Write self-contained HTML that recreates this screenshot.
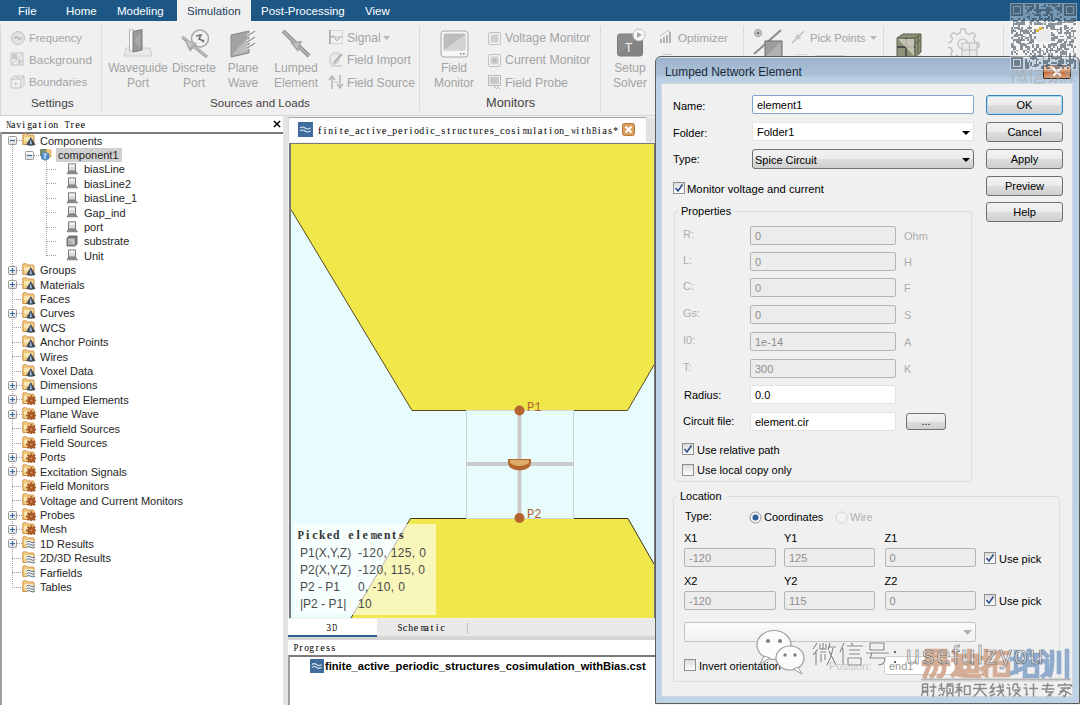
<!DOCTYPE html>
<html><head><meta charset="utf-8">
<style>
*{box-sizing:border-box}
html,body{margin:0;padding:0}
body{width:1080px;height:705px;overflow:hidden;position:relative;background:#f0f0f0;font-family:"Liberation Sans",sans-serif;color:#000}
.a{position:absolute}
.t{position:absolute;white-space:nowrap;line-height:14px;height:14px}
.m{font-family:"Liberation Mono",monospace}
/* menu */
#menu{left:0;top:0;width:1080px;height:21px;background:#1d5786}
.mi{position:absolute;top:4px;color:#fff;font-size:11.5px;line-height:14px;white-space:nowrap}
/* ribbon */
#ribbon{left:0;top:21px;width:1080px;height:95px;background:#f0f0f0;border-bottom:1px solid #d4d4d4}
.rt{position:absolute;color:#a3a3a3;font-size:12.1px;line-height:14px;white-space:nowrap}
.rc{position:absolute;color:#a3a3a3;font-size:12px;line-height:15px;text-align:center;white-space:nowrap}
.gl{position:absolute;color:#444;font-size:12.2px;line-height:14px;white-space:nowrap;top:96px}
.sep{position:absolute;top:25px;width:1px;height:85px;background:#dcdcdc}
/* tree */
.tr{position:absolute;font-size:11px;line-height:14px;white-space:nowrap;color:#262626}
/* dialog */
.dl{position:absolute;font-size:11px;line-height:14px;white-space:nowrap;color:#000}
.dg{position:absolute;font-size:11px;line-height:14px;white-space:nowrap;color:#adadad}
.inp{position:absolute;background:#fff;border:1px solid #abadb3;border-radius:2px;font-size:11px;line-height:16px;padding-left:4px;padding-top:1px;white-space:nowrap}
.dis{background:#ececec;border-color:#b4b4b4;color:#8e8e8e}
.btn{position:absolute;border:1px solid #707070;border-radius:3px;background:linear-gradient(#f3f3f3 0%,#ebebeb 50%,#dddddd 51%,#cfcfcf 100%);font-size:11px;line-height:18px;text-align:center;color:#000}
.cb{position:absolute;width:12px;height:12px;border:1px solid #8f8f8f;background:linear-gradient(#dcdcdc,#fff)}
</style></head>
<body>
<!-- MENU -->
<div id="menu" class="a">
  <div class="mi" style="left:18px">File</div>
  <div class="mi" style="left:66px">Home</div>
  <div class="mi" style="left:117px">Modeling</div>
  <div class="a" style="left:177px;top:0;width:74px;height:22px;background:#f0f0f0"></div>
  <div class="mi" style="left:187px;color:#1e3a5c">Simulation</div>
  <div class="mi" style="left:261px">Post-Processing</div>
  <div class="mi" style="left:365px">View</div>
</div>
<!-- RIBBON -->
<div id="ribbon" class="a">
  <div class="a" style="left:0;top:4px;width:1px;height:90px;background:#d8d8d8"></div>
  <!-- Settings group -->
  <svg class="a" style="left:10px;top:9px" width="16" height="16" viewBox="0 0 16 16"><circle cx="8" cy="8" r="6.5" fill="#e2e2e2" stroke="#c4c4c4"/><path d="M4.5 8.5 Q6 5.5 8 8 T11.5 7.5" fill="none" stroke="#a8a8a8" stroke-width="1.2"/></svg>
  <div class="rt" style="left:29px;top:10px;font-size:11.2px">Frequency</div>
  <svg class="a" style="left:10px;top:31px" width="14" height="14" viewBox="0 0 14 14"><rect x="1" y="1" width="12" height="12" fill="#ececec" stroke="#c0c0c0"/><path d="M2 2 H7 V7 H2Z" fill="#c8c8c8"/><path d="M2 12 L12 2" stroke="#c0c0c0"/><circle cx="9.5" cy="9.5" r="2.2" fill="#cacaca"/></svg>
  <div class="rt" style="left:29px;top:32px;font-size:11.8px">Background</div>
  <svg class="a" style="left:10px;top:53px" width="15" height="15" viewBox="0 0 15 15"><path d="M1 5 L4 2 H14 V11 L11 14 H1Z" fill="#eeeeee" stroke="#c2c2c2"/><path d="M1 5 H11 V14 M11 5 L14 2" fill="none" stroke="#c2c2c2"/><rect x="5" y="9" width="1.5" height="1.5" fill="#aaa"/><rect x="7" y="3" width="1.5" height="1" fill="#aaa"/></svg>
  <div class="rt" style="left:29px;top:54px;font-size:11.5px">Boundaries</div>
  <div class="gl" style="left:31px;top:75px;color:#444;font-size:11.8px">Settings</div>
  <div class="sep" style="left:101px;top:5px"></div>
  <!-- Sources and loads -->
  <svg class="a" style="left:123px;top:7px" width="30" height="29" viewBox="0 0 30 29"><path d="M3 20 H27 L29 28 H1Z" fill="#e9e9e9" stroke="#cfcfcf"/><rect x="6.5" y="2" width="4" height="21" fill="#fafafa" stroke="#b5b5b5"/><path d="M10 3.5 L19 1.5 V22 L10 24Z" fill="#9a9a9a" stroke="#7d7d7d"/><path d="M11 12 L17 6 V20Z" fill="#b6b6b6" opacity=".6"/></svg>
  <div class="rc" style="left:102px;top:40px;width:72px">Waveguide<br>Port</div>
  <svg class="a" style="left:180px;top:7px" width="31" height="30" viewBox="0 0 31 30"><circle cx="20" cy="10.5" r="8.5" fill="#f0f0f0" stroke="#a5a5a5" stroke-width="1.5"/><path d="M16 8 L21 7 L19 11 L24 13" fill="none" stroke="#707070" stroke-width="1.6"/><path d="M22 12.5 L24.5 13.2 L23 15" fill="#707070"/><path d="M2 9 L27 29" stroke="#9c9c9c" stroke-width="3"/><path d="M2 9 L27 29" stroke="#c4c4c4" stroke-width="1.2"/><path d="M4 11 L17 15.5 L10 24 Z" fill="#a9a9a9"/><path d="M6 12.5 L14 15.5 L10 20Z" fill="#c6c6c6"/></svg>
  <div class="rc" style="left:166px;top:40px;width:56px">Discrete<br>Port</div>
  <svg class="a" style="left:229px;top:9px" width="28" height="28" viewBox="0 0 28 28"><path d="M2 5 L20 1 V23 L2 27Z" fill="#a3a3a3" stroke="#8b8b8b"/><path d="M3 25 L19 7 V22Z" fill="#bcbcbc"/><path d="M18 6 q4 -2 8 -5 M18 12 q4 -2 8 -5 M18 18 q4 -2 8 -5" fill="none" stroke="#fbfbfb" stroke-width="3"/><path d="M18 6 q4 -2 8 -5 M18 12 q4 -2 8 -5 M18 18 q4 -2 8 -5" fill="none" stroke="#8e8e8e" stroke-width="1.2"/></svg>
  <div class="rc" style="left:222px;top:40px;width:42px">Plane<br>Wave</div>
  <svg class="a" style="left:281px;top:9px" width="30" height="28" viewBox="0 0 30 28"><path d="M2 1 L28 26" stroke="#8a8a8a" stroke-width="4"/><path d="M2 1 L28 26" stroke="#b5b5b5" stroke-width="2"/><path d="M9 12 L21 11 L17 22 Z" fill="#a3a3a3"/><path d="M12 13 L19 12.5 L16.5 19Z" fill="#c0c0c0"/></svg>
  <div class="rc" style="left:266px;top:40px;width:60px">Lumped<br>Element</div>
  <svg class="a" style="left:329px;top:9px" width="14" height="14" viewBox="0 0 14 14"><rect x="0.5" y="0.5" width="13" height="13" fill="#f2f2f2" stroke="#d4d4d4"/><path d="M1 0 V14" stroke="#8a8a8a"/><path d="M2 8 q2 -5 4 0 t4 0 q1.5 -3 3 0" fill="none" stroke="#a9a9a9"/><path d="M1 7 H13" stroke="#bbb"/></svg>
  <div class="rt" style="left:347px;top:10px">Signal</div>
  <svg class="a" style="left:383px;top:15px" width="7" height="4"><path d="M0 0 H7 L3.5 4Z" fill="#b8b8b8"/></svg>
  <svg class="a" style="left:329px;top:31px" width="15" height="15" viewBox="0 0 15 15"><path d="M1 4 L4 1 H10 V9 L7 12 H1Z" fill="#e8e8e8" stroke="#c4c4c4"/><path d="M5 11 L13 2" stroke="#b0b0b0" stroke-width="2"/><path d="M2 14 H13" stroke="#d0d0d0" stroke-width="1.5"/></svg>
  <div class="rt" style="left:347px;top:32px">Field Import</div>
  <svg class="a" style="left:328px;top:53px" width="16" height="16" viewBox="0 0 16 16"><path d="M4 15 V3 M1 6 L4 2 L7 6 M12 1 V13 M9 10 L12 14 L15 10" fill="none" stroke="#b9b9b9" stroke-width="1.6"/><path d="M4 8 L12 8" stroke="#c9c9c9"/></svg>
  <div class="rt" style="left:347px;top:55px">Field Source</div>
  <div class="gl" style="left:210px;top:75px;font-size:11.6px">Sources and Loads</div>
  <div class="sep" style="left:419px;top:5px"></div>
  <!-- Monitors -->
  <svg class="a" style="left:440px;top:9px" width="29" height="28" viewBox="0 0 29 28"><rect x="1" y="1" width="27" height="26" rx="3" fill="#f6f6f6" stroke="#a8a8a8"/><rect x="3.5" y="3.5" width="22" height="17" rx="1.5" fill="#bdbdbd"/><path d="M3.5 20 L25 5 V20Z" fill="#d4d4d4"/><rect x="20" y="23" width="1.6" height="1.6" fill="#888"/><rect x="23" y="23" width="1.6" height="1.6" fill="#888"/></svg>
  <div class="rc" style="left:428px;top:40px;width:52px">Field<br>Monitor</div>
  <svg class="a" style="left:488px;top:11px" width="13" height="13" viewBox="0 0 13 13"><rect x="0.5" y="0.5" width="12" height="12" rx="1.5" fill="#f4f4f4" stroke="#c0c0c0"/><rect x="2.5" y="2.5" width="8" height="8" fill="#cfcfcf"/></svg>
  <div class="rt" style="left:505px;top:10px;font-size:12.3px">Voltage Monitor</div>
  <svg class="a" style="left:488px;top:33px" width="13" height="13" viewBox="0 0 13 13"><rect x="0.5" y="0.5" width="12" height="12" rx="1.5" fill="#f4f4f4" stroke="#c0c0c0"/><rect x="2.5" y="2.5" width="8" height="8" fill="#cfcfcf"/><circle cx="6.5" cy="6.5" r="2" fill="#bbb"/></svg>
  <div class="rt" style="left:505px;top:32px;font-size:12.3px">Current Monitor</div>
  <svg class="a" style="left:488px;top:54px" width="14" height="15" viewBox="0 0 14 15"><rect x="0.5" y="0.5" width="12" height="10" fill="#f0f0f0" stroke="#b8b8b8"/><rect x="2" y="2" width="9" height="7" fill="#c9c9c9"/><path d="M6 11 L9 14 M9 11 L12 14" stroke="#aaa"/></svg>
  <div class="rt" style="left:505px;top:55px;font-size:12.3px">Field Probe</div>
  <div class="gl" style="left:486px;top:75px;font-size:12.8px">Monitors</div>
  <div class="sep" style="left:600px;top:5px"></div>
  <!-- Setup solver -->
  <svg class="a" style="left:616px;top:7px" width="30" height="30" viewBox="0 0 30 30"><rect x="1.5" y="6" width="25" height="22" rx="2.5" fill="#8c8c8c" stroke="#7a7a7a"/><path d="M2 27 L26 7 V27Z" fill="#7a7a7a" opacity=".5"/><text x="9" y="24" font-family="Liberation Sans" font-size="12" fill="#f4f4f4">T</text><circle cx="23" cy="7" r="6" fill="#f6f6f6" stroke="#c2c2c2"/><path d="M21 4 L26 7 L21 10Z" fill="#a9a9a9"/></svg>
  <div class="rc" style="left:606px;top:40px;width:48px">Setup<br>Solver</div>
  <svg class="a" style="left:660px;top:9px" width="13" height="14" viewBox="0 0 13 14"><path d="M1 13 V9 M4 13 V7 M7 13 V5 M10 13 V2" stroke="#b2b2b2" stroke-width="2"/><path d="M0 6 L7 1 L10 1" fill="none" stroke="#c0c0c0"/></svg>
  <div class="rt" style="left:678px;top:10px;font-size:11.7px">Optimizer</div>
  <div class="sep" style="left:743px;top:5px"></div>
  <!-- Pick -->
  <svg class="a" style="left:753px;top:7px" width="30" height="30" viewBox="0 0 30 30"><circle cx="5" cy="5" r="3.5" fill="#cfcfcf" stroke="#9a9a9a"/><circle cx="5" cy="5" r="1.5" fill="#777"/><path d="M1 26 L28 2" stroke="#8f8f8f" stroke-width="2.2"/><rect x="12" y="13" width="17" height="16" fill="#9d9d9d" stroke="#6f6f6f"/><path d="M13 28 L28 14 V28Z" fill="#b2b2b2"/></svg>
  <svg class="a" style="left:791px;top:9px" width="14" height="14" viewBox="0 0 14 14"><path d="M1 13 L13 1" stroke="#c0c0c0" stroke-width="1.4"/><circle cx="7" cy="7" r="2.5" fill="#c8c8c8"/></svg>
  <div class="rt" style="left:810px;top:10px;font-size:11.2px">Pick Points</div>
  <svg class="a" style="left:870px;top:15px" width="7" height="4"><path d="M0 0 H7 L3.5 4Z" fill="#b8b8b8"/></svg>
  <div class="sep" style="left:883px;top:5px"></div>
  <svg class="a" style="left:894px;top:11px" width="30" height="27" viewBox="0 0 30 27"><ellipse cx="15" cy="24" rx="13" ry="2.5" fill="#d6d6d6"/><path d="M3 6 L9 2 H27 V20 L21 25 H3Z" fill="#8e9278" stroke="#5f5f4a"/><path d="M3 6 H21 V25 M21 6 L27 2" fill="none" stroke="#5f5f4a"/><path d="M3 15 H21 M12 6 V25" stroke="#3a3a3a" stroke-width="1.4"/><path d="M4 7 L20 24 V7Z" fill="#d2cfbf" opacity=".8"/><path d="M21 12 L27 8 M24 4 V22" stroke="#5a5a45"/></svg>
  <svg class="a" style="left:948px;top:6px" width="32" height="32" viewBox="0 0 32 32"><path d="M13 2 h4 l1 4 l3 1.5 l3.5 -2 l3 3 l-2 3.5 l1.5 3 l4 1 v4 l-4 1 l-1.5 3 l2 3.5 l-3 3 l-3.5 -2 l-3 1.5 l-1 4 h-4 l-1 -4 l-3 -1.5 l-3.5 2 l-3 -3 l2 -3.5 l-1.5 -3 l-4 -1 v-4 l4 -1 l1.5 -3 l-2 -3.5 l3 -3 l3.5 2 l3 -1.5Z" fill="#efefef" stroke="#c2c2c2" stroke-width="1.4"/><circle cx="15" cy="17" r="5" fill="#f0f0f0" stroke="#c8c8c8" stroke-width="1.4"/><rect x="14" y="16" width="15" height="14" fill="#e9e9e9" stroke="#bdbdbd"/><path d="M14 23 H29 M21.5 16 V30" stroke="#bdbdbd"/><ellipse cx="21" cy="31" rx="9" ry="1" fill="#d8d8d8"/></svg>
  <div class="sep" style="left:1003px;top:5px"></div>
  <div class="a" style="left:662px;top:33px;width:10px;height:3px;border-top:1px solid #c8c8c8"></div>
  <div class="a" style="left:796px;top:33px;width:12px;height:3px;border-top:1px solid #d8d8d8;border-left:1px solid #d8d8d8"></div>
  <div class="a" style="left:815px;top:34px;width:30px;height:2px;border-top:1px solid #d0d0d0"></div>
</div>

<!-- LEFT PANEL -->
<svg width="0" height="0" style="position:absolute"><defs>
<linearGradient id="fg" x1="0" y1="0" x2="0" y2="1"><stop offset="0" stop-color="#f5d690"/><stop offset="1" stop-color="#dc9a48"/></linearGradient>
<linearGradient id="bx" x1="0" y1="0" x2="0" y2="1"><stop offset="0" stop-color="#ffffff"/><stop offset="1" stop-color="#dcdcdc"/></linearGradient>
<symbol id="fold" viewBox="0 0 14 13"><path d="M0.8 1.8 Q0.8 0.8 1.8 0.8 H4.5 L5.5 2 H11 Q12 2 12 3 V11.5 H0.8Z" fill="url(#fg)" stroke="#cf8d3e" stroke-width=".9"/><path d="M1.8 4 H11 V10.8 H1.8Z" fill="#f8e6b2"/><path d="M1.8 8 H11 V10.8 H1.8Z" fill="#efcf88"/></symbol>
<symbol id="cone" viewBox="0 0 14 13"><use href="#fold" width="14" height="13"/><path d="M8.8 4 L13.5 11.8 Q8.8 13.8 4.2 11.8Z" fill="#3e4858"/><path d="M8.8 5.5 L10 11 Q8.8 11.8 7.6 11Z" fill="#a8c0da"/></symbol>
<symbol id="gear" viewBox="0 0 14 13"><use href="#fold" width="14" height="13"/><g fill="#a85a28"><circle cx="9.3" cy="8.5" r="3.7"/><rect x="8.3" y="3.3" width="2" height="10.4"/><rect x="4.1" y="7.5" width="10.4" height="2"/><rect x="8.3" y="3.3" width="2" height="10.4" transform="rotate(45 9.3 8.5)"/><rect x="8.3" y="3.3" width="2" height="10.4" transform="rotate(-45 9.3 8.5)"/></g><circle cx="9.3" cy="8.5" r="1.1" fill="#d89060"/></symbol>
<symbol id="res" viewBox="0 0 14 13"><use href="#fold" width="14" height="13"/><path d="M4.5 6 q2 -1.6 4.2 0 t4.3 0 M4.5 8.6 q2 -1.6 4.2 0 t4.3 0 M4.5 11.2 q2 -1.6 4.2 0 t4.3 0" fill="none" stroke="#ffffff" stroke-width="2"/><path d="M4.5 6 q2 -1.6 4.2 0 t4.3 0 M4.5 8.6 q2 -1.6 4.2 0 t4.3 0 M4.5 11.2 q2 -1.6 4.2 0 t4.3 0" fill="none" stroke="#4f6a92" stroke-width="1"/></symbol>
<symbol id="sheet" viewBox="0 0 12 12"><path d="M2.5 0.8 H9.5 V8.2 H2.5Z" fill="#dadada" stroke="#7c7c7c" stroke-width="1"/><path d="M3.3 1.6 H8.8 V4 H3.3Z" fill="#efefef"/><path d="M2.5 8.2 L1 10.8 H11.5 L9.5 8.2Z" fill="#8c8c8c" stroke="#6c6c6c" stroke-width=".7"/></symbol>
<symbol id="solid" viewBox="0 0 12 12"><path d="M1 3 L3 1 H11 V9 L9 11 H1Z" fill="#7e7e7e" stroke="#505050" stroke-width=".8"/><path d="M1.8 3.4 H8.6 V10.2 H1.8Z" fill="#aeaeae"/><path d="M2 4 L8.5 10 V4Z" fill="#c4c4c4"/></symbol>
<symbol id="comp" viewBox="0 0 14 13"><rect x="1" y="1" width="7" height="7" fill="#7e8f6e"/><path d="M7 2 H12 V9 H7Z" fill="#f0c878" stroke="#d09040" stroke-width=".6"/><path d="M2.5 6 L6 4 L10 6 V10.5 L6 12.5 L2.5 10.5Z" fill="#4f8cc8" stroke="#3a6ea8" stroke-width=".6"/><path d="M6 7 V11 M4 6 L8 6" stroke="#eef5ff" stroke-width="1.2"/></symbol>
<symbol id="plus" viewBox="0 0 9 9"><rect x=".5" y=".5" width="8" height="8" rx="1" fill="url(#bx)" stroke="#9a9a9a"/><path d="M2 4.5 H7 M4.5 2 V7" stroke="#3b6aa8" stroke-width="1.2"/></symbol>
<symbol id="minus" viewBox="0 0 9 9"><rect x=".5" y=".5" width="8" height="8" rx="1" fill="url(#bx)" stroke="#9a9a9a"/><path d="M2 4.5 H7" stroke="#3b6aa8" stroke-width="1.2"/></symbol>
</defs></svg>
<div class="a" style="left:0;top:116px;width:283px;height:589px;background:#fff">
<div class="t" style="left:5px;top:2px;font-size:10.5px;font-family:'Liberation Serif',serif;color:#000"><b style="display:inline-block;width:5.39px;text-align:center;font-weight:inherit"><i style="display:inline-block;font-style:normal;transform:scaleX(0.64)">N</i></b><b style="display:inline-block;width:5.39px;text-align:center;font-weight:inherit">a</b><b style="display:inline-block;width:5.39px;text-align:center;font-weight:inherit"><i style="display:inline-block;font-style:normal;transform:scaleX(0.92)">v</i></b><b style="display:inline-block;width:5.39px;text-align:center;font-weight:inherit">i</b><b style="display:inline-block;width:5.39px;text-align:center;font-weight:inherit"><i style="display:inline-block;font-style:normal;transform:scaleX(0.92)">g</i></b><b style="display:inline-block;width:5.39px;text-align:center;font-weight:inherit">a</b><b style="display:inline-block;width:5.39px;text-align:center;font-weight:inherit">t</b><b style="display:inline-block;width:5.39px;text-align:center;font-weight:inherit">i</b><b style="display:inline-block;width:5.39px;text-align:center;font-weight:inherit"><i style="display:inline-block;font-style:normal;transform:scaleX(0.92)">o</i></b><b style="display:inline-block;width:5.39px;text-align:center;font-weight:inherit"><i style="display:inline-block;font-style:normal;transform:scaleX(0.92)">n</i></b><b style="display:inline-block;width:5.39px;text-align:center;font-weight:inherit">&nbsp;</b><b style="display:inline-block;width:5.39px;text-align:center;font-weight:inherit"><i style="display:inline-block;font-style:normal;transform:scaleX(0.76)">T</i></b><b style="display:inline-block;width:5.39px;text-align:center;font-weight:inherit">r</b><b style="display:inline-block;width:5.39px;text-align:center;font-weight:inherit">e</b><b style="display:inline-block;width:5.39px;text-align:center;font-weight:inherit">e</b></div>
<svg class="a" style="left:273px;top:4px" width="8" height="8" viewBox="0 0 9 9"><path d="M1 1 L8 8 M8 1 L1 8" stroke="#000" stroke-width="1.6"/></svg>
<div class="a" style="left:0;top:16px;width:283px;height:2px;background:#7a7a7a"></div>
<div class="a" style="left:0;top:16px;width:2px;height:573px;background:#a0a0a0"></div>
</div>
<div class="a" style="left:12px;top:145px;width:1px;height:443px;background:repeating-linear-gradient(#a0a0a0 0 1px,transparent 1px 2px)"></div>
<div class="a" style="left:29px;top:160px;width:1px;height:-7px;background:repeating-linear-gradient(#a0a0a0 0 1px,transparent 1px 2px)"></div>
<div class="a" style="left:46px;top:161px;width:1px;height:95px;background:repeating-linear-gradient(#a0a0a0 0 1px,transparent 1px 2px)"></div>
<div class="a" style="left:17px;top:140px;width:5px;height:1px;background:repeating-linear-gradient(90deg,#a0a0a0 0 1px,transparent 1px 2px)"></div>
<svg class="a" style="left:8px;top:136px" width="9" height="9"><use href="#minus" width="9" height="9"/></svg>
<svg class="a" style="left:22px;top:133px" width="14" height="13"><use href="#cone" width="14" height="13"/></svg>
<div class="tr" style="left:40px;top:133.6px">Components</div>
<div class="a" style="left:34px;top:155px;width:5px;height:1px;background:repeating-linear-gradient(90deg,#a0a0a0 0 1px,transparent 1px 2px)"></div>
<svg class="a" style="left:25px;top:151px" width="9" height="9"><use href="#minus" width="9" height="9"/></svg>
<svg class="a" style="left:39px;top:148px" width="14" height="13"><use href="#comp" width="14" height="13"/></svg>
<div class="a" style="left:56px;top:148px;width:66px;height:14px;background:#d0d0d0"></div>
<div class="tr" style="left:58px;top:148.0px">component1</div>
<div class="a" style="left:47px;top:169px;width:9px;height:1px;background:repeating-linear-gradient(90deg,#a0a0a0 0 1px,transparent 1px 2px)"></div>
<svg class="a" style="left:66px;top:163px" width="12" height="12"><use href="#sheet" width="12" height="12"/></svg>
<div class="tr" style="left:84px;top:162.4px">biasLine</div>
<div class="a" style="left:47px;top:183px;width:9px;height:1px;background:repeating-linear-gradient(90deg,#a0a0a0 0 1px,transparent 1px 2px)"></div>
<svg class="a" style="left:66px;top:177px" width="12" height="12"><use href="#sheet" width="12" height="12"/></svg>
<div class="tr" style="left:84px;top:176.8px">biasLine2</div>
<div class="a" style="left:47px;top:198px;width:9px;height:1px;background:repeating-linear-gradient(90deg,#a0a0a0 0 1px,transparent 1px 2px)"></div>
<svg class="a" style="left:66px;top:192px" width="12" height="12"><use href="#sheet" width="12" height="12"/></svg>
<div class="tr" style="left:84px;top:191.2px">biasLine_1</div>
<div class="a" style="left:47px;top:212px;width:9px;height:1px;background:repeating-linear-gradient(90deg,#a0a0a0 0 1px,transparent 1px 2px)"></div>
<svg class="a" style="left:66px;top:206px" width="12" height="12"><use href="#sheet" width="12" height="12"/></svg>
<div class="tr" style="left:84px;top:205.6px">Gap_ind</div>
<div class="a" style="left:47px;top:227px;width:9px;height:1px;background:repeating-linear-gradient(90deg,#a0a0a0 0 1px,transparent 1px 2px)"></div>
<svg class="a" style="left:66px;top:221px" width="12" height="12"><use href="#sheet" width="12" height="12"/></svg>
<div class="tr" style="left:84px;top:220.0px">port</div>
<div class="a" style="left:47px;top:241px;width:9px;height:1px;background:repeating-linear-gradient(90deg,#a0a0a0 0 1px,transparent 1px 2px)"></div>
<svg class="a" style="left:66px;top:235px" width="12" height="12"><use href="#solid" width="12" height="12"/></svg>
<div class="tr" style="left:84px;top:234.4px">substrate</div>
<div class="a" style="left:47px;top:255px;width:9px;height:1px;background:repeating-linear-gradient(90deg,#a0a0a0 0 1px,transparent 1px 2px)"></div>
<svg class="a" style="left:66px;top:249px" width="12" height="12"><use href="#sheet" width="12" height="12"/></svg>
<div class="tr" style="left:84px;top:248.8px">Unit</div>
<div class="a" style="left:17px;top:270px;width:5px;height:1px;background:repeating-linear-gradient(90deg,#a0a0a0 0 1px,transparent 1px 2px)"></div>
<svg class="a" style="left:8px;top:266px" width="9" height="9"><use href="#plus" width="9" height="9"/></svg>
<svg class="a" style="left:22px;top:263px" width="14" height="13"><use href="#cone" width="14" height="13"/></svg>
<div class="tr" style="left:40px;top:263.2px">Groups</div>
<div class="a" style="left:17px;top:284px;width:5px;height:1px;background:repeating-linear-gradient(90deg,#a0a0a0 0 1px,transparent 1px 2px)"></div>
<svg class="a" style="left:8px;top:280px" width="9" height="9"><use href="#plus" width="9" height="9"/></svg>
<svg class="a" style="left:22px;top:277px" width="14" height="13"><use href="#cone" width="14" height="13"/></svg>
<div class="tr" style="left:40px;top:277.6px">Materials</div>
<div class="a" style="left:12px;top:299px;width:10px;height:1px;background:repeating-linear-gradient(90deg,#a0a0a0 0 1px,transparent 1px 2px)"></div>
<svg class="a" style="left:22px;top:292px" width="14" height="13"><use href="#cone" width="14" height="13"/></svg>
<div class="tr" style="left:40px;top:292.0px">Faces</div>
<div class="a" style="left:17px;top:313px;width:5px;height:1px;background:repeating-linear-gradient(90deg,#a0a0a0 0 1px,transparent 1px 2px)"></div>
<svg class="a" style="left:8px;top:309px" width="9" height="9"><use href="#plus" width="9" height="9"/></svg>
<svg class="a" style="left:22px;top:306px" width="14" height="13"><use href="#cone" width="14" height="13"/></svg>
<div class="tr" style="left:40px;top:306.4px">Curves</div>
<div class="a" style="left:12px;top:327px;width:10px;height:1px;background:repeating-linear-gradient(90deg,#a0a0a0 0 1px,transparent 1px 2px)"></div>
<svg class="a" style="left:22px;top:320px" width="14" height="13"><use href="#cone" width="14" height="13"/></svg>
<div class="tr" style="left:40px;top:320.8px">WCS</div>
<div class="a" style="left:12px;top:342px;width:10px;height:1px;background:repeating-linear-gradient(90deg,#a0a0a0 0 1px,transparent 1px 2px)"></div>
<svg class="a" style="left:22px;top:335px" width="14" height="13"><use href="#cone" width="14" height="13"/></svg>
<div class="tr" style="left:40px;top:335.2px">Anchor Points</div>
<div class="a" style="left:12px;top:356px;width:10px;height:1px;background:repeating-linear-gradient(90deg,#a0a0a0 0 1px,transparent 1px 2px)"></div>
<svg class="a" style="left:22px;top:349px" width="14" height="13"><use href="#cone" width="14" height="13"/></svg>
<div class="tr" style="left:40px;top:349.6px">Wires</div>
<div class="a" style="left:12px;top:371px;width:10px;height:1px;background:repeating-linear-gradient(90deg,#a0a0a0 0 1px,transparent 1px 2px)"></div>
<svg class="a" style="left:22px;top:364px" width="14" height="13"><use href="#cone" width="14" height="13"/></svg>
<div class="tr" style="left:40px;top:364.0px">Voxel Data</div>
<div class="a" style="left:17px;top:385px;width:5px;height:1px;background:repeating-linear-gradient(90deg,#a0a0a0 0 1px,transparent 1px 2px)"></div>
<svg class="a" style="left:8px;top:381px" width="9" height="9"><use href="#plus" width="9" height="9"/></svg>
<svg class="a" style="left:22px;top:378px" width="14" height="13"><use href="#cone" width="14" height="13"/></svg>
<div class="tr" style="left:40px;top:378.4px">Dimensions</div>
<div class="a" style="left:17px;top:399px;width:5px;height:1px;background:repeating-linear-gradient(90deg,#a0a0a0 0 1px,transparent 1px 2px)"></div>
<svg class="a" style="left:8px;top:395px" width="9" height="9"><use href="#plus" width="9" height="9"/></svg>
<svg class="a" style="left:22px;top:392px" width="14" height="13"><use href="#gear" width="14" height="13"/></svg>
<div class="tr" style="left:40px;top:392.8px">Lumped Elements</div>
<div class="a" style="left:17px;top:414px;width:5px;height:1px;background:repeating-linear-gradient(90deg,#a0a0a0 0 1px,transparent 1px 2px)"></div>
<svg class="a" style="left:8px;top:410px" width="9" height="9"><use href="#plus" width="9" height="9"/></svg>
<svg class="a" style="left:22px;top:407px" width="14" height="13"><use href="#gear" width="14" height="13"/></svg>
<div class="tr" style="left:40px;top:407.2px">Plane Wave</div>
<div class="a" style="left:12px;top:428px;width:10px;height:1px;background:repeating-linear-gradient(90deg,#a0a0a0 0 1px,transparent 1px 2px)"></div>
<svg class="a" style="left:22px;top:421px" width="14" height="13"><use href="#gear" width="14" height="13"/></svg>
<div class="tr" style="left:40px;top:421.6px">Farfield Sources</div>
<div class="a" style="left:12px;top:443px;width:10px;height:1px;background:repeating-linear-gradient(90deg,#a0a0a0 0 1px,transparent 1px 2px)"></div>
<svg class="a" style="left:22px;top:436px" width="14" height="13"><use href="#gear" width="14" height="13"/></svg>
<div class="tr" style="left:40px;top:436.0px">Field Sources</div>
<div class="a" style="left:17px;top:457px;width:5px;height:1px;background:repeating-linear-gradient(90deg,#a0a0a0 0 1px,transparent 1px 2px)"></div>
<svg class="a" style="left:8px;top:453px" width="9" height="9"><use href="#plus" width="9" height="9"/></svg>
<svg class="a" style="left:22px;top:450px" width="14" height="13"><use href="#gear" width="14" height="13"/></svg>
<div class="tr" style="left:40px;top:450.4px">Ports</div>
<div class="a" style="left:17px;top:471px;width:5px;height:1px;background:repeating-linear-gradient(90deg,#a0a0a0 0 1px,transparent 1px 2px)"></div>
<svg class="a" style="left:8px;top:467px" width="9" height="9"><use href="#plus" width="9" height="9"/></svg>
<svg class="a" style="left:22px;top:464px" width="14" height="13"><use href="#gear" width="14" height="13"/></svg>
<div class="tr" style="left:40px;top:464.8px">Excitation Signals</div>
<div class="a" style="left:12px;top:486px;width:10px;height:1px;background:repeating-linear-gradient(90deg,#a0a0a0 0 1px,transparent 1px 2px)"></div>
<svg class="a" style="left:22px;top:479px" width="14" height="13"><use href="#gear" width="14" height="13"/></svg>
<div class="tr" style="left:40px;top:479.2px">Field Monitors</div>
<div class="a" style="left:12px;top:500px;width:10px;height:1px;background:repeating-linear-gradient(90deg,#a0a0a0 0 1px,transparent 1px 2px)"></div>
<svg class="a" style="left:22px;top:493px" width="14" height="13"><use href="#gear" width="14" height="13"/></svg>
<div class="tr" style="left:40px;top:493.6px">Voltage and Current Monitors</div>
<div class="a" style="left:17px;top:515px;width:5px;height:1px;background:repeating-linear-gradient(90deg,#a0a0a0 0 1px,transparent 1px 2px)"></div>
<svg class="a" style="left:8px;top:511px" width="9" height="9"><use href="#plus" width="9" height="9"/></svg>
<svg class="a" style="left:22px;top:508px" width="14" height="13"><use href="#gear" width="14" height="13"/></svg>
<div class="tr" style="left:40px;top:508.0px">Probes</div>
<div class="a" style="left:17px;top:529px;width:5px;height:1px;background:repeating-linear-gradient(90deg,#a0a0a0 0 1px,transparent 1px 2px)"></div>
<svg class="a" style="left:8px;top:525px" width="9" height="9"><use href="#plus" width="9" height="9"/></svg>
<svg class="a" style="left:22px;top:522px" width="14" height="13"><use href="#gear" width="14" height="13"/></svg>
<div class="tr" style="left:40px;top:522.4px">Mesh</div>
<div class="a" style="left:17px;top:543px;width:5px;height:1px;background:repeating-linear-gradient(90deg,#a0a0a0 0 1px,transparent 1px 2px)"></div>
<svg class="a" style="left:8px;top:539px" width="9" height="9"><use href="#plus" width="9" height="9"/></svg>
<svg class="a" style="left:22px;top:536px" width="14" height="13"><use href="#res" width="14" height="13"/></svg>
<div class="tr" style="left:40px;top:536.8px">1D Results</div>
<div class="a" style="left:12px;top:558px;width:10px;height:1px;background:repeating-linear-gradient(90deg,#a0a0a0 0 1px,transparent 1px 2px)"></div>
<svg class="a" style="left:22px;top:551px" width="14" height="13"><use href="#res" width="14" height="13"/></svg>
<div class="tr" style="left:40px;top:551.2px">2D/3D Results</div>
<div class="a" style="left:12px;top:572px;width:10px;height:1px;background:repeating-linear-gradient(90deg,#a0a0a0 0 1px,transparent 1px 2px)"></div>
<svg class="a" style="left:22px;top:565px" width="14" height="13"><use href="#res" width="14" height="13"/></svg>
<div class="tr" style="left:40px;top:565.6px">Farfields</div>
<div class="a" style="left:12px;top:587px;width:10px;height:1px;background:repeating-linear-gradient(90deg,#a0a0a0 0 1px,transparent 1px 2px)"></div>
<svg class="a" style="left:22px;top:580px" width="14" height="13"><use href="#res" width="14" height="13"/></svg>
<div class="tr" style="left:40px;top:580.0px">Tables</div>
<div class="a" style="left:283px;top:116px;width:5px;height:589px;background:#e4e4e4"></div>

<!-- VIEW -->
<div class="a" style="left:288px;top:116px;width:367px;height:589px;background:#f0f0f0">
  <div class="a" style="left:0;top:1px;width:359px;height:25px;background:#fdfdfd;border:1px solid #dcdcdc;border-top-color:#a8a8a8;border-bottom:none"></div>
  <div class="a" style="left:359px;top:2px;width:8px;height:24px;background:#e2e2e2"></div>
</div>
<svg class="a" style="left:298px;top:122px" width="15" height="15" viewBox="0 0 15 15"><rect width="15" height="15" fill="#3f6c9c"/><path d="M2 6 q2.5 -2 5 0 t5.5 0 M2 9 q2.5 -2 5 0 t5.5 0" fill="none" stroke="#dfe8f2" stroke-width="1.2"/></svg>
<div class="t" style="left:317px;top:124px;font-size:10.5px;font-family:'Liberation Serif',serif;color:#000"><b style="display:inline-block;width:5.39px;text-align:center;font-weight:inherit">f</b><b style="display:inline-block;width:5.39px;text-align:center;font-weight:inherit">i</b><b style="display:inline-block;width:5.39px;text-align:center;font-weight:inherit"><i style="display:inline-block;font-style:normal;transform:scaleX(0.92)">n</i></b><b style="display:inline-block;width:5.39px;text-align:center;font-weight:inherit">i</b><b style="display:inline-block;width:5.39px;text-align:center;font-weight:inherit">t</b><b style="display:inline-block;width:5.39px;text-align:center;font-weight:inherit">e</b><b style="display:inline-block;width:5.39px;text-align:center;font-weight:inherit"><i style="display:inline-block;font-style:normal;transform:scaleX(0.92)">_</i></b><b style="display:inline-block;width:5.39px;text-align:center;font-weight:inherit">a</b><b style="display:inline-block;width:5.39px;text-align:center;font-weight:inherit">c</b><b style="display:inline-block;width:5.39px;text-align:center;font-weight:inherit">t</b><b style="display:inline-block;width:5.39px;text-align:center;font-weight:inherit">i</b><b style="display:inline-block;width:5.39px;text-align:center;font-weight:inherit"><i style="display:inline-block;font-style:normal;transform:scaleX(0.92)">v</i></b><b style="display:inline-block;width:5.39px;text-align:center;font-weight:inherit">e</b><b style="display:inline-block;width:5.39px;text-align:center;font-weight:inherit"><i style="display:inline-block;font-style:normal;transform:scaleX(0.92)">_</i></b><b style="display:inline-block;width:5.39px;text-align:center;font-weight:inherit"><i style="display:inline-block;font-style:normal;transform:scaleX(0.92)">p</i></b><b style="display:inline-block;width:5.39px;text-align:center;font-weight:inherit">e</b><b style="display:inline-block;width:5.39px;text-align:center;font-weight:inherit">r</b><b style="display:inline-block;width:5.39px;text-align:center;font-weight:inherit">i</b><b style="display:inline-block;width:5.39px;text-align:center;font-weight:inherit"><i style="display:inline-block;font-style:normal;transform:scaleX(0.92)">o</i></b><b style="display:inline-block;width:5.39px;text-align:center;font-weight:inherit"><i style="display:inline-block;font-style:normal;transform:scaleX(0.92)">d</i></b><b style="display:inline-block;width:5.39px;text-align:center;font-weight:inherit">i</b><b style="display:inline-block;width:5.39px;text-align:center;font-weight:inherit">c</b><b style="display:inline-block;width:5.39px;text-align:center;font-weight:inherit"><i style="display:inline-block;font-style:normal;transform:scaleX(0.92)">_</i></b><b style="display:inline-block;width:5.39px;text-align:center;font-weight:inherit">s</b><b style="display:inline-block;width:5.39px;text-align:center;font-weight:inherit">t</b><b style="display:inline-block;width:5.39px;text-align:center;font-weight:inherit">r</b><b style="display:inline-block;width:5.39px;text-align:center;font-weight:inherit"><i style="display:inline-block;font-style:normal;transform:scaleX(0.92)">u</i></b><b style="display:inline-block;width:5.39px;text-align:center;font-weight:inherit">c</b><b style="display:inline-block;width:5.39px;text-align:center;font-weight:inherit">t</b><b style="display:inline-block;width:5.39px;text-align:center;font-weight:inherit"><i style="display:inline-block;font-style:normal;transform:scaleX(0.92)">u</i></b><b style="display:inline-block;width:5.39px;text-align:center;font-weight:inherit">r</b><b style="display:inline-block;width:5.39px;text-align:center;font-weight:inherit">e</b><b style="display:inline-block;width:5.39px;text-align:center;font-weight:inherit">s</b><b style="display:inline-block;width:5.39px;text-align:center;font-weight:inherit"><i style="display:inline-block;font-style:normal;transform:scaleX(0.92)">_</i></b><b style="display:inline-block;width:5.39px;text-align:center;font-weight:inherit">c</b><b style="display:inline-block;width:5.39px;text-align:center;font-weight:inherit"><i style="display:inline-block;font-style:normal;transform:scaleX(0.92)">o</i></b><b style="display:inline-block;width:5.39px;text-align:center;font-weight:inherit">s</b><b style="display:inline-block;width:5.39px;text-align:center;font-weight:inherit">i</b><b style="display:inline-block;width:5.39px;text-align:center;font-weight:inherit"><i style="display:inline-block;font-style:normal;transform:scaleX(0.59)">m</i></b><b style="display:inline-block;width:5.39px;text-align:center;font-weight:inherit"><i style="display:inline-block;font-style:normal;transform:scaleX(0.92)">u</i></b><b style="display:inline-block;width:5.39px;text-align:center;font-weight:inherit">l</b><b style="display:inline-block;width:5.39px;text-align:center;font-weight:inherit">a</b><b style="display:inline-block;width:5.39px;text-align:center;font-weight:inherit">t</b><b style="display:inline-block;width:5.39px;text-align:center;font-weight:inherit">i</b><b style="display:inline-block;width:5.39px;text-align:center;font-weight:inherit"><i style="display:inline-block;font-style:normal;transform:scaleX(0.92)">o</i></b><b style="display:inline-block;width:5.39px;text-align:center;font-weight:inherit"><i style="display:inline-block;font-style:normal;transform:scaleX(0.92)">n</i></b><b style="display:inline-block;width:5.39px;text-align:center;font-weight:inherit"><i style="display:inline-block;font-style:normal;transform:scaleX(0.92)">_</i></b><b style="display:inline-block;width:5.39px;text-align:center;font-weight:inherit"><i style="display:inline-block;font-style:normal;transform:scaleX(0.64)">w</i></b><b style="display:inline-block;width:5.39px;text-align:center;font-weight:inherit">i</b><b style="display:inline-block;width:5.39px;text-align:center;font-weight:inherit">t</b><b style="display:inline-block;width:5.39px;text-align:center;font-weight:inherit"><i style="display:inline-block;font-style:normal;transform:scaleX(0.92)">h</i></b><b style="display:inline-block;width:5.39px;text-align:center;font-weight:inherit"><i style="display:inline-block;font-style:normal;transform:scaleX(0.69)">B</i></b><b style="display:inline-block;width:5.39px;text-align:center;font-weight:inherit">i</b><b style="display:inline-block;width:5.39px;text-align:center;font-weight:inherit">a</b><b style="display:inline-block;width:5.39px;text-align:center;font-weight:inherit">s</b><b style="display:inline-block;width:5.39px;text-align:center;font-weight:inherit"><i style="display:inline-block;font-style:normal;transform:scaleX(0.92)">*</i></b></div>
<svg class="a" style="left:622px;top:123px" width="13" height="13" viewBox="0 0 13 13"><rect x=".5" y=".5" width="12" height="12" rx="2" fill="#d8a060" stroke="#b97a3a"/><path d="M3.5 3.5 L9.5 9.5 M9.5 3.5 L3.5 9.5" stroke="#fff" stroke-width="2"/></svg>
<!-- 3D view -->
<div class="a" style="left:289px;top:143px;width:366px;height:475px;background:#7a7a7a"></div>
<svg class="a" style="left:291px;top:144px" width="363" height="474" viewBox="291 144 363 474">
  <rect x="291" y="144" width="363" height="474" fill="#e6fcfd"/>
  <path d="M291 144 H654 V365 L627.5 410.5 H412 L291 209.5Z" fill="#f0e84b"/>
  <path d="M291 209.5 L412 410.5 H627.5 L654 365" fill="none" stroke="#5a4522" stroke-width="1"/>
  <path d="M410.5 518.5 H628 L654 564 V618 H351Z" fill="#f0e84b"/>
  <path d="M351 618 L410.5 518.5 H628 L654 564" fill="none" stroke="#3d3322" stroke-width="1"/>
  <rect x="466.5" y="410.5" width="107" height="108" fill="#e6fcfd" stroke="#d2d2d2" stroke-width="1"/>
  <rect x="517.5" y="411" width="4" height="107" fill="#cbcbcb"/>
  <rect x="467" y="462" width="106" height="4" fill="#cbcbcb"/>
  <path d="M508 459 H531 V462 Q531 470 519.5 470.5 Q508 470 508 462Z" fill="#b5652e"/>
  <path d="M510 460 H529 V463 Q525 466 519.5 466 Q514 466 510 463Z" fill="#dcad68"/>
  <circle cx="519.5" cy="410.5" r="5" fill="#b5652e"/>
  <circle cx="519.5" cy="518" r="5" fill="#b5652e"/>
  <rect x="294" y="524" width="142" height="91" fill="#ffffff" opacity=".62"/>
</svg>
<div class="t m" style="left:527px;top:400.5px;font-size:12px;color:#b0602a">P1</div>
<div class="t m" style="left:527px;top:508px;font-size:12px;color:#b0602a">P2</div>
<div class="t" style="left:297px;top:528px;font-size:12px;font-weight:bold;font-family:'Liberation Serif',serif;color:#333"><b style="display:inline-block;width:7.2px;text-align:center;font-weight:inherit"><i style="display:inline-block;font-style:normal;transform:scaleX(0.88)">P</i></b><b style="display:inline-block;width:7.2px;text-align:center;font-weight:inherit">i</b><b style="display:inline-block;width:7.2px;text-align:center;font-weight:inherit">c</b><b style="display:inline-block;width:7.2px;text-align:center;font-weight:inherit"><i style="display:inline-block;font-style:normal;transform:scaleX(0.97)">k</i></b><b style="display:inline-block;width:7.2px;text-align:center;font-weight:inherit">e</b><b style="display:inline-block;width:7.2px;text-align:center;font-weight:inherit"><i style="display:inline-block;font-style:normal;transform:scaleX(0.97)">d</i></b><b style="display:inline-block;width:7.2px;text-align:center;font-weight:inherit">&nbsp;</b><b style="display:inline-block;width:7.2px;text-align:center;font-weight:inherit">e</b><b style="display:inline-block;width:7.2px;text-align:center;font-weight:inherit">l</b><b style="display:inline-block;width:7.2px;text-align:center;font-weight:inherit">e</b><b style="display:inline-block;width:7.2px;text-align:center;font-weight:inherit"><i style="display:inline-block;font-style:normal;transform:scaleX(0.65)">m</i></b><b style="display:inline-block;width:7.2px;text-align:center;font-weight:inherit">e</b><b style="display:inline-block;width:7.2px;text-align:center;font-weight:inherit"><i style="display:inline-block;font-style:normal;transform:scaleX(0.97)">n</i></b><b style="display:inline-block;width:7.2px;text-align:center;font-weight:inherit">t</b><b style="display:inline-block;width:7.2px;text-align:center;font-weight:inherit">s</b></div>
<div class="t" style="left:300px;top:545.5px;font-size:12px;color:#4a4a4a">P1(X,Y,Z)</div>
<div class="t" style="left:358px;top:545.5px;font-size:12px;color:#4a4a4a;letter-spacing:.35px">-120, 125, 0</div>
<div class="t" style="left:300px;top:562.5px;font-size:12px;color:#4a4a4a">P2(X,Y,Z)</div>
<div class="t" style="left:358px;top:562.5px;font-size:12px;color:#4a4a4a;letter-spacing:.35px">-120, 115, 0</div>
<div class="t" style="left:300px;top:580px;font-size:12px;color:#4a4a4a">P2 - P1</div>
<div class="t" style="left:358px;top:580px;font-size:12px;color:#4a4a4a;letter-spacing:.35px">0, -10, 0</div>
<div class="t" style="left:300px;top:596.5px;font-size:12px;color:#4a4a4a">|P2 - P1|</div>
<div class="t" style="left:358px;top:596.5px;font-size:12px;color:#4a4a4a;letter-spacing:.35px">10</div>
<!-- bottom tabs -->
<div class="a" style="left:288px;top:619px;width:367px;height:18px;background:#e9e9e9;border-bottom:1px solid #d8d8d8"></div>
<div class="a" style="left:288px;top:619px;width:89px;height:18px;background:#fff;border-bottom:2px solid #2f5f8f"></div>
<div class="t" style="left:326px;top:621px;font-size:10.5px;font-family:'Liberation Serif',serif"><b style="display:inline-block;width:5.39px;text-align:center;font-weight:inherit"><i style="display:inline-block;font-style:normal;transform:scaleX(0.92)">3</i></b><b style="display:inline-block;width:5.39px;text-align:center;font-weight:inherit"><i style="display:inline-block;font-style:normal;transform:scaleX(0.64)">D</i></b></div>
<div class="t" style="left:397px;top:621px;font-size:10.5px;font-family:'Liberation Serif',serif"><b style="display:inline-block;width:5.39px;text-align:center;font-weight:inherit"><i style="display:inline-block;font-style:normal;transform:scaleX(0.83)">S</i></b><b style="display:inline-block;width:5.39px;text-align:center;font-weight:inherit">c</b><b style="display:inline-block;width:5.39px;text-align:center;font-weight:inherit"><i style="display:inline-block;font-style:normal;transform:scaleX(0.92)">h</i></b><b style="display:inline-block;width:5.39px;text-align:center;font-weight:inherit">e</b><b style="display:inline-block;width:5.39px;text-align:center;font-weight:inherit"><i style="display:inline-block;font-style:normal;transform:scaleX(0.59)">m</i></b><b style="display:inline-block;width:5.39px;text-align:center;font-weight:inherit">a</b><b style="display:inline-block;width:5.39px;text-align:center;font-weight:inherit">t</b><b style="display:inline-block;width:5.39px;text-align:center;font-weight:inherit">i</b><b style="display:inline-block;width:5.39px;text-align:center;font-weight:inherit">c</b></div>
<div class="a" style="left:467px;top:623px;width:1px;height:11px;background:#c0c0c0"></div>
<!-- progress -->
<div class="a" style="left:288px;top:637px;width:367px;height:3px;background:#d4d4d4"></div>
<div class="a" style="left:288px;top:640px;width:367px;height:15px;background:#fff"></div>
<div class="t" style="left:293px;top:641px;font-size:10.5px;font-family:'Liberation Serif',serif"><b style="display:inline-block;width:5.39px;text-align:center;font-weight:inherit"><i style="display:inline-block;font-style:normal;transform:scaleX(0.83)">P</i></b><b style="display:inline-block;width:5.39px;text-align:center;font-weight:inherit">r</b><b style="display:inline-block;width:5.39px;text-align:center;font-weight:inherit"><i style="display:inline-block;font-style:normal;transform:scaleX(0.92)">o</i></b><b style="display:inline-block;width:5.39px;text-align:center;font-weight:inherit"><i style="display:inline-block;font-style:normal;transform:scaleX(0.92)">g</i></b><b style="display:inline-block;width:5.39px;text-align:center;font-weight:inherit">r</b><b style="display:inline-block;width:5.39px;text-align:center;font-weight:inherit">e</b><b style="display:inline-block;width:5.39px;text-align:center;font-weight:inherit">s</b><b style="display:inline-block;width:5.39px;text-align:center;font-weight:inherit">s</b></div>
<div class="a" style="left:288px;top:655px;width:367px;height:50px;border-top:2px solid #7a7a7a;border-left:2px solid #a0a0a0;background:#fff"></div>
<svg class="a" style="left:310px;top:659px" width="14" height="14" viewBox="0 0 15 15"><rect width="15" height="15" fill="#3f6c9c"/><path d="M2 6 q2.5 -2 5 0 t5.5 0 M2 9 q2.5 -2 5 0 t5.5 0" fill="none" stroke="#dfe8f2" stroke-width="1.2"/></svg>
<div class="t" style="left:325px;top:659px;font-size:11.15px;font-weight:bold">finite_active_periodic_structures_cosimulation_withBias.cst</div>


<!-- DIALOG -->
<div class="a" style="left:655px;top:56px;width:425px;height:648px;border:1px solid #5c5c5c;border-radius:6px 6px 0 0;box-shadow:inset 0 1px 0 #dce8f2;background:linear-gradient(#9db3cb 2px,#a7bdd4 12px,#a9c3d8 19px,#b8cde2 20px,#bdd1e6 27px,#bfd2e6)"></div>
<div class="dl" style="left:665px;top:65px;font-size:11.9px;color:#1e2a3a;line-height:14px">Lumped Network Element</div>
<div class="a" style="left:661px;top:83px;width:412px;height:614px;background:#f0f0f0;border:1px solid #cdd9e4;border-top-color:#d4d8dc"></div>
<!-- close -->
<div class="a" style="left:1043px;top:65px;width:28px;height:14px;border:1px solid #3a2a20;border-radius:2px;background:linear-gradient(#e7b595,#d88a5a 50%,#c86a38 51%,#e0a070)"></div>
<svg class="a" style="left:1051px;top:67px" width="12" height="10" viewBox="0 0 12 10"><path d="M2 1 L10 9 M10 1 L2 9" stroke="#fff" stroke-width="2.2"/></svg>
<!-- rows -->
<div class="dl" style="left:673px;top:99px">Name:</div>
<div class="inp" style="left:752px;top:95px;width:222px;height:19px;border-color:#7ea4cf">element1</div>
<div class="dl" style="left:673px;top:126px">Folder:</div>
<div class="inp" style="left:752px;top:122px;width:222px;height:19px;border-color:#e4e4e4">Folder1</div>
<svg class="a" style="left:962px;top:131px" width="8" height="4"><path d="M0 0 H8 L4 4Z" fill="#000"/></svg>
<div class="dl" style="left:673px;top:152px">Type:</div>
<div class="inp" style="left:752px;top:149px;width:222px;height:20px;border-color:#707070;background:linear-gradient(#f2f2f2,#ebebeb 50%,#dddddd 51%,#cfcfcf);border-radius:3px;padding-left:2px;line-height:18px">Spice Circuit</div>
<svg class="a" style="left:962px;top:158px" width="8" height="4"><path d="M0 0 H8 L4 4Z" fill="#000"/></svg>
<div class="btn" style="left:986px;top:95px;width:77px;height:20px;border-color:#3c7fb1;box-shadow:inset 0 0 0 1px #a8dcf5">OK</div>
<div class="btn" style="left:986px;top:122px;width:77px;height:20px">Cancel</div>
<div class="btn" style="left:986px;top:149px;width:77px;height:20px">Apply</div>
<div class="btn" style="left:986px;top:176px;width:77px;height:20px">Preview</div>
<div class="btn" style="left:986px;top:202px;width:77px;height:20px">Help</div>
<div class="cb" style="left:673px;top:182px"></div>
<svg class="a" style="left:674px;top:183px" width="10" height="10" viewBox="0 0 10 10"><path d="M1.5 5 L4 8 L8.5 1.5" fill="none" stroke="#2a4a8a" stroke-width="1.5"/></svg>
<div class="dl" style="left:687px;top:182px;font-size:11.25px">Monitor voltage and current</div>
<!-- properties group -->
<div class="a" style="left:674px;top:211px;width:298px;height:271px;border:1px solid #d5dfe5;border-radius:3px"></div>
<div class="a" style="left:678px;top:204px;width:56px;height:14px;background:#f0f0f0"></div>
<div class="dl" style="left:681px;top:204px">Properties</div>
<div class="dg" style="left:683px;top:226.5px">R:</div>
<div class="inp dis" style="left:750px;top:225.5px;width:146px;height:19px">0</div>
<div class="dg" style="left:904px;top:228.5px">Ohm</div>
<div class="dg" style="left:683px;top:252.5px">L:</div>
<div class="inp dis" style="left:750px;top:251.5px;width:146px;height:19px">0</div>
<div class="dg" style="left:904px;top:254.5px">H</div>
<div class="dg" style="left:683px;top:279.0px">C:</div>
<div class="inp dis" style="left:750px;top:278.0px;width:146px;height:19px">0</div>
<div class="dg" style="left:904px;top:281.0px">F</div>
<div class="dg" style="left:683px;top:306.0px">Gs:</div>
<div class="inp dis" style="left:750px;top:305.0px;width:146px;height:19px">0</div>
<div class="dg" style="left:904px;top:308.0px">S</div>
<div class="dg" style="left:683px;top:333.0px">I0:</div>
<div class="inp dis" style="left:750px;top:332.0px;width:146px;height:19px">1e-14</div>
<div class="dg" style="left:904px;top:335.0px">A</div>
<div class="dg" style="left:683px;top:359.5px">T:</div>
<div class="inp dis" style="left:750px;top:358.5px;width:146px;height:19px">300</div>
<div class="dg" style="left:904px;top:361.5px">K</div>
<div class="dl" style="left:684px;top:388px">Radius:</div>
<div class="inp" style="left:750px;top:385px;width:146px;height:19px;border-color:#e2e2e2">0.0</div>
<div class="dl" style="left:683px;top:414px">Circuit file:</div>
<div class="inp" style="left:750px;top:412px;width:146px;height:19px;border-color:#e2e2e2">element.cir</div>
<div class="btn" style="left:906px;top:413px;width:40px;height:17px;line-height:15px">...</div>
<div class="cb" style="left:682px;top:443px"></div>
<svg class="a" style="left:683px;top:444px" width="10" height="10" viewBox="0 0 10 10"><path d="M1.5 5 L4 8 L8.5 1.5" fill="none" stroke="#2a4a8a" stroke-width="1.5"/></svg>
<div class="dl" style="left:697px;top:443px">Use relative path</div>
<div class="cb" style="left:682px;top:464px"></div>
<div class="dl" style="left:697px;top:463px">Use local copy only</div>
<!-- location group -->
<div class="a" style="left:673px;top:496px;width:387px;height:186px;border:1px solid #d5dfe5;border-radius:3px"></div>
<div class="a" style="left:677px;top:489px;width:50px;height:14px;background:#f0f0f0"></div>
<div class="dl" style="left:680px;top:489px">Location</div>
<div class="dl" style="left:685px;top:509px">Type:</div>
<svg class="a" style="left:749px;top:511px" width="13" height="13" viewBox="0 0 13 13"><circle cx="6.5" cy="6.5" r="5.5" fill="#f4f4f4" stroke="#8e8f8f"/><circle cx="6.5" cy="6.5" r="3" fill="#2b5f9a"/></svg>
<div class="dl" style="left:764px;top:510px">Coordinates</div>
<svg class="a" style="left:835px;top:511px" width="13" height="13" viewBox="0 0 13 13"><circle cx="6.5" cy="6.5" r="5.5" fill="#f4f4f4" stroke="#cfcfcf"/></svg>
<div class="dg" style="left:850px;top:510px">Wire</div>
<div class="dl" style="left:684px;top:531px">X1</div>
<div class="inp dis" style="left:684px;top:547.5px;width:92px;height:19px">-120</div>
<div class="dl" style="left:784px;top:531px">Y1</div>
<div class="inp dis" style="left:784px;top:547.5px;width:91px;height:19px">125</div>
<div class="dl" style="left:884.5px;top:531px">Z1</div>
<div class="inp dis" style="left:884.5px;top:547.5px;width:91px;height:19px">0</div>
<div class="cb" style="left:984px;top:552px"></div>
<svg class="a" style="left:985px;top:553px" width="10" height="10" viewBox="0 0 10 10"><path d="M1.5 5 L4 8 L8.5 1.5" fill="none" stroke="#2a4a8a" stroke-width="1.5"/></svg>
<div class="dl" style="left:999px;top:552px">Use pick</div>
<div class="dl" style="left:684px;top:573.5px">X2</div>
<div class="inp dis" style="left:684px;top:591px;width:92px;height:19px">-120</div>
<div class="dl" style="left:784px;top:573.5px">Y2</div>
<div class="inp dis" style="left:784px;top:591px;width:91px;height:19px">115</div>
<div class="dl" style="left:884.5px;top:573.5px">Z2</div>
<div class="inp dis" style="left:884.5px;top:591px;width:91px;height:19px">0</div>
<div class="cb" style="left:984px;top:594px"></div>
<svg class="a" style="left:985px;top:595px" width="10" height="10" viewBox="0 0 10 10"><path d="M1.5 5 L4 8 L8.5 1.5" fill="none" stroke="#2a4a8a" stroke-width="1.5"/></svg>
<div class="dl" style="left:999px;top:594px">Use pick</div>
<div class="inp" style="left:684px;top:622px;width:292px;height:20px;border-color:#c4c4c4;background:linear-gradient(#fbfbfb,#f1f1f1)"></div>
<svg class="a" style="left:963px;top:630px" width="9" height="5"><path d="M0 0 H9 L4.5 5Z" fill="#b0b0b0"/></svg>
<div class="cb" style="left:684px;top:659px"></div>
<div class="dl" style="left:699px;top:659px">Invert orientation</div>
<div class="dg" style="left:829px;top:659px;color:#c8c8c8">Position:</div>
<div class="inp" style="left:884px;top:656px;width:91px;height:19px;border-color:#d0d0d0;color:#9a9a9a">end1</div>
<!-- watermark QR -->
<svg class="a" style="left:1010px;top:3px" width="67" height="67" viewBox="-0.5 -0.5 38 38" shape-rendering="crispEdges"><rect x="-0.5" y="-0.5" width="38" height="38" fill="#ffffff" opacity=".4"/><path d="M0 0h7v1h-7zM8 0h5v1h-5zM14 0h2v1h-2zM19 0h1v1h-1zM21 0h1v1h-1zM23 0h4v1h-4zM28 0h1v1h-1zM30 0h7v1h-7zM0 1h1v1h-1zM6 1h1v1h-1zM12 1h1v1h-1zM14 1h2v1h-2zM17 1h3v1h-3zM24 1h1v1h-1zM28 1h1v1h-1zM30 1h1v1h-1zM36 1h1v1h-1zM0 2h1v1h-1zM2 2h3v1h-3zM6 2h1v1h-1zM8 2h1v1h-1zM10 2h3v1h-3zM14 2h2v1h-2zM20 2h3v1h-3zM25 2h4v1h-4zM30 2h1v1h-1zM32 2h3v1h-3zM36 2h1v1h-1zM0 3h1v1h-1zM2 3h3v1h-3zM6 3h1v1h-1zM9 3h3v1h-3zM13 3h11v1h-11zM26 3h3v1h-3zM30 3h1v1h-1zM32 3h3v1h-3zM36 3h1v1h-1zM0 4h1v1h-1zM2 4h3v1h-3zM6 4h1v1h-1zM9 4h1v1h-1zM14 4h3v1h-3zM20 4h2v1h-2zM28 4h1v1h-1zM30 4h1v1h-1zM32 4h3v1h-3zM36 4h1v1h-1zM0 5h1v1h-1zM6 5h1v1h-1zM8 5h1v1h-1zM12 5h1v1h-1zM15 5h1v1h-1zM20 5h2v1h-2zM23 5h1v1h-1zM26 5h2v1h-2zM30 5h1v1h-1zM36 5h1v1h-1zM0 6h7v1h-7zM10 6h1v1h-1zM13 6h4v1h-4zM18 6h3v1h-3zM22 6h2v1h-2zM26 6h1v1h-1zM30 6h7v1h-7zM9 7h2v1h-2zM16 7h1v1h-1zM21 7h1v1h-1zM23 7h1v1h-1zM28 7h1v1h-1zM0 8h1v1h-1zM4 8h1v1h-1zM7 8h1v1h-1zM10 8h1v1h-1zM12 8h2v1h-2zM16 8h2v1h-2zM19 8h3v1h-3zM23 8h1v1h-1zM25 8h3v1h-3zM30 8h1v1h-1zM34 8h3v1h-3zM1 9h3v1h-3zM6 9h2v1h-2zM11 9h2v1h-2zM14 9h2v1h-2zM19 9h1v1h-1zM21 9h1v1h-1zM23 9h2v1h-2zM27 9h2v1h-2zM30 9h7v1h-7zM1 10h1v1h-1zM3 10h5v1h-5zM10 10h2v1h-2zM13 10h1v1h-1zM15 10h2v1h-2zM18 10h1v1h-1zM22 10h1v1h-1zM26 10h5v1h-5zM32 10h3v1h-3zM1 11h7v1h-7zM11 11h1v1h-1zM13 11h5v1h-5zM19 11h1v1h-1zM21 11h8v1h-8zM35 11h2v1h-2zM1 12h1v1h-1zM4 12h1v1h-1zM10 12h1v1h-1zM20 12h5v1h-5zM30 12h2v1h-2zM0 13h1v1h-1zM2 13h3v1h-3zM6 13h1v1h-1zM9 13h3v1h-3zM16 13h3v1h-3zM20 13h1v1h-1zM22 13h3v1h-3zM28 13h1v1h-1zM30 13h3v1h-3zM34 13h1v1h-1zM0 14h2v1h-2zM4 14h3v1h-3zM8 14h1v1h-1zM10 14h1v1h-1zM13 14h1v1h-1zM23 14h6v1h-6zM30 14h1v1h-1zM33 14h1v1h-1zM0 15h3v1h-3zM5 15h5v1h-5zM11 15h1v1h-1zM13 15h1v1h-1zM26 15h1v1h-1zM28 15h1v1h-1zM31 15h2v1h-2zM34 15h3v1h-3zM0 16h1v1h-1zM3 16h1v1h-1zM5 16h1v1h-1zM7 16h4v1h-4zM12 16h2v1h-2zM23 16h1v1h-1zM27 16h2v1h-2zM30 16h4v1h-4zM35 16h1v1h-1zM2 17h5v1h-5zM10 17h2v1h-2zM23 17h2v1h-2zM31 17h1v1h-1zM33 17h1v1h-1zM35 17h1v1h-1zM1 18h3v1h-3zM6 18h2v1h-2zM10 18h2v1h-2zM13 18h1v1h-1zM24 18h3v1h-3zM28 18h2v1h-2zM32 18h4v1h-4zM0 19h1v1h-1zM4 19h1v1h-1zM6 19h1v1h-1zM8 19h2v1h-2zM11 19h1v1h-1zM13 19h1v1h-1zM23 19h4v1h-4zM32 19h2v1h-2zM36 19h1v1h-1zM1 20h7v1h-7zM9 20h1v1h-1zM11 20h2v1h-2zM23 20h2v1h-2zM27 20h3v1h-3zM31 20h1v1h-1zM34 20h2v1h-2zM1 21h1v1h-1zM3 21h3v1h-3zM10 21h3v1h-3zM26 21h3v1h-3zM30 21h2v1h-2zM33 21h3v1h-3zM0 22h1v1h-1zM4 22h4v1h-4zM9 22h3v1h-3zM23 22h4v1h-4zM29 22h2v1h-2zM33 22h1v1h-1zM0 23h2v1h-2zM5 23h4v1h-4zM12 23h1v1h-1zM14 23h2v1h-2zM18 23h1v1h-1zM21 23h5v1h-5zM28 23h3v1h-3zM32 23h3v1h-3zM0 24h3v1h-3zM5 24h2v1h-2zM8 24h3v1h-3zM12 24h1v1h-1zM14 24h2v1h-2zM18 24h2v1h-2zM21 24h2v1h-2zM24 24h1v1h-1zM26 24h1v1h-1zM28 24h3v1h-3zM34 24h1v1h-1zM36 24h1v1h-1zM1 25h2v1h-2zM5 25h2v1h-2zM9 25h2v1h-2zM13 25h2v1h-2zM16 25h1v1h-1zM20 25h1v1h-1zM22 25h2v1h-2zM26 25h3v1h-3zM30 25h3v1h-3zM35 25h1v1h-1zM1 26h1v1h-1zM3 26h1v1h-1zM7 26h2v1h-2zM10 26h1v1h-1zM12 26h3v1h-3zM16 26h2v1h-2zM20 26h8v1h-8zM29 26h1v1h-1zM31 26h1v1h-1zM35 26h1v1h-1zM0 27h1v1h-1zM2 27h1v1h-1zM7 27h1v1h-1zM9 27h1v1h-1zM12 27h1v1h-1zM15 27h2v1h-2zM18 27h1v1h-1zM20 27h1v1h-1zM22 27h1v1h-1zM25 27h2v1h-2zM28 27h4v1h-4zM35 27h1v1h-1zM0 28h1v1h-1zM3 28h1v1h-1zM8 28h1v1h-1zM11 28h1v1h-1zM13 28h1v1h-1zM16 28h1v1h-1zM18 28h2v1h-2zM21 28h1v1h-1zM23 28h1v1h-1zM28 28h4v1h-4zM33 28h1v1h-1zM36 28h1v1h-1zM10 29h1v1h-1zM12 29h2v1h-2zM15 29h3v1h-3zM21 29h3v1h-3zM26 29h1v1h-1zM28 29h1v1h-1zM31 29h1v1h-1zM33 29h1v1h-1zM35 29h2v1h-2zM0 30h7v1h-7zM11 30h4v1h-4zM18 30h1v1h-1zM21 30h1v1h-1zM23 30h6v1h-6zM33 30h1v1h-1zM35 30h1v1h-1zM0 31h1v1h-1zM6 31h1v1h-1zM8 31h1v1h-1zM12 31h1v1h-1zM14 31h2v1h-2zM21 31h1v1h-1zM25 31h1v1h-1zM28 31h2v1h-2zM31 31h1v1h-1zM33 31h3v1h-3zM0 32h1v1h-1zM2 32h3v1h-3zM6 32h1v1h-1zM8 32h1v1h-1zM10 32h1v1h-1zM14 32h1v1h-1zM18 32h4v1h-4zM27 32h3v1h-3zM31 32h6v1h-6zM0 33h1v1h-1zM2 33h3v1h-3zM6 33h1v1h-1zM8 33h2v1h-2zM11 33h1v1h-1zM14 33h1v1h-1zM16 33h1v1h-1zM18 33h3v1h-3zM23 33h3v1h-3zM27 33h3v1h-3zM31 33h1v1h-1zM33 33h2v1h-2zM36 33h1v1h-1zM0 34h1v1h-1zM2 34h3v1h-3zM6 34h1v1h-1zM8 34h2v1h-2zM11 34h1v1h-1zM13 34h3v1h-3zM18 34h1v1h-1zM20 34h2v1h-2zM26 34h3v1h-3zM32 34h2v1h-2zM36 34h1v1h-1zM0 35h1v1h-1zM6 35h1v1h-1zM8 35h3v1h-3zM12 35h3v1h-3zM17 35h1v1h-1zM19 35h2v1h-2zM24 35h2v1h-2zM27 35h5v1h-5zM36 35h1v1h-1zM0 36h7v1h-7zM8 36h2v1h-2zM17 36h2v1h-2zM20 36h2v1h-2zM25 36h3v1h-3zM29 36h1v1h-1zM32 36h1v1h-1zM35 36h2v1h-2z" fill="#1c2c3c" opacity=".5"/><rect x="14.5" y="14.5" width="8" height="7" rx="2" fill="#e8e8e8" opacity=".8"/><circle cx="15" cy="15" r="1" fill="#e0b840"/><circle cx="17" cy="14" r="1" fill="#e0b840"/></svg>
<svg class="a" style="left:1010px;top:68px" width="68" height="16" viewBox="0 0 68 16"><g fill="none" stroke="#a8a8a8" stroke-width="1" opacity=".85">
<path d="M4 1 L1 6 M5 5 L1 10 M3 8 V15 M7 2 V6 H12 V2 M7 8 H12 M8 10 V14 M11 10 V13 M14 1 L13 6 M13 4 H17 M16 5 Q15 11 12 15 M14 8 L17 15"/>
<path d="M22 1 L19 8 M21 5 V15 M25 3 H34 M26 6 H33 M26 9 H33 M25 11 H34 V15 H25Z"/>
<path d="M38 3 H44 M41 1 V14 M38 8 H44 M38 14 L44 12 M46 1 L47 3 M51 1 L50 3 M45 4 H52 M45 8 H52 M48 4 V9 L45 15 M48 9 L52 15"/>
<path d="M58 1 L55 5 M62 1 L60 4 M55 5 H64 M59 5 L56 9 H63 M61 9 V15 M57 11 L55 14 M63 11 L65 14"/>
</g></svg>
<!-- watermark wechat -->
<svg class="a" style="left:750px;top:620px" width="330" height="85" viewBox="750 620 330 85">
  <g opacity=".95">
  <ellipse cx="774" cy="645" rx="17" ry="14.5" fill="#fdfdfd" stroke="#9a9a9a" stroke-width="1.2"/>
  <path d="M764 656 L760 664 L770 658Z" fill="#fdfdfd" stroke="#9a9a9a" stroke-width="1"/>
  <circle cx="768" cy="641" r="2" fill="#777"/><circle cx="780" cy="641" r="2" fill="#777"/>
  <ellipse cx="790" cy="658" rx="14" ry="12" fill="#fdfdfd" stroke="#9a9a9a" stroke-width="1.2"/>
  <path d="M798 667 L802 674 L793 669Z" fill="#fdfdfd" stroke="#9a9a9a" stroke-width="1"/>
  <circle cx="785" cy="655" r="1.7" fill="#777"/><circle cx="795" cy="655" r="1.7" fill="#777"/>
  </g>
  <g fill="none" stroke="#ffffff" stroke-width="2.6" opacity=".9"><path d="M817 643 L813 649 M818 649 L813 655 M816 652 V665 M820 644 V649 M823 643 V649 M826 644 V649 M820 649 H826 M820 652 H826 M821 654 V662 M825 654 V660 M830 643 L828 650 M828 647 H836 M833 648 Q831 658 827 665 M829 651 L836 665"/><path d="M844 643 L840 652 M843 648 V665 M851 643 L853 645 M847 646 H863 M849 650 H860 M849 654 H860 M848 658 H861 V665 H848Z"/><path d="M870 643 H884 V650 H870Z M866 653 H889 M872 653 L870 658 H885 Q885 665 878 665"/></g>
  <g fill="none" stroke="#6a6a6a" stroke-width="1.1" opacity=".85"><path d="M817 643 L813 649 M818 649 L813 655 M816 652 V665 M820 644 V649 M823 643 V649 M826 644 V649 M820 649 H826 M820 652 H826 M821 654 V662 M825 654 V660 M830 643 L828 650 M828 647 H836 M833 648 Q831 658 827 665 M829 651 L836 665"/><path d="M844 643 L840 652 M843 648 V665 M851 643 L853 645 M847 646 H863 M849 650 H860 M849 654 H860 M848 658 H861 V665 H848Z"/><path d="M870 643 H884 V650 H870Z M866 653 H889 M872 653 L870 658 H885 Q885 665 878 665"/></g>
  <rect x="894" y="651" width="2" height="2" fill="#666"/><rect x="894" y="661" width="2" height="2" fill="#666"/>
  <g transform="translate(921 650)" fill="none" stroke="#cfa58c" stroke-width="4.6" stroke-linecap="square" opacity=".9"><path d="M6 1 H24 V11 H6Z M6 6 H24 M3 14 H27 M10 11 L4 26 M15 14 Q16 20 11 26 M23 14 Q24 26 18 26"/></g>
  <g transform="translate(951 650)" fill="none" stroke="#cfa58c" stroke-width="4.6" stroke-linecap="square" opacity=".9"><path d="M3 2 L6 5 M2 10 H6 V21 L2 25 M6 24 Q10 26 28 26 M10 6 H26 V21 H10Z M18 1 V21 M10 13.5 H26"/></g>
  <g transform="translate(981 650)" fill="none" stroke="#cfa58c" stroke-width="4.6" stroke-linecap="square" opacity=".9"><path d="M5 1 V25 L3 24 M1 8 H9 M1 19 L9 15 M11 3 H28 M19 3 L13 14 M14 13 H27 V25 H14Z"/></g>
  <g transform="translate(1011 650)" fill="none" stroke="#8aa7c8" stroke-width="4.6" stroke-linecap="square" opacity=".95"><path d="M5 2 V22 M1 9 H9 M1 23 L10 19 M18 1 L19 4 M12 5 H28 M15 7 L17 11 M25 7 L23 11 M11 12 H29 M14 15 H26 V26 H14Z"/></g>
  <g transform="translate(1041 650)" fill="none" stroke="#8aa7c8" stroke-width="4.6" stroke-linecap="square" opacity=".95"><path d="M2 2 L6 6 M1 11 H6 V23 L2 26 M11 2 Q12 16 9 25 M18 3 V22 M26 1 V27"/></g>
  <g font-family="Liberation Sans" font-size="25" letter-spacing="2">
    <text x="906" y="664" fill="#ffffff" opacity=".5">usefulzyou</text>
    <text x="906" y="664" fill="none" stroke="#4a4a4a" stroke-width=".6" opacity=".85">usefulzyou</text>
  </g>
  <rect x="921" y="678.5" width="150" height="2" fill="#b5b5b5"/>
  <g transform="translate(921.5 683)" fill="none" stroke="#8a8a8a" stroke-width="1.5"><path d="M1 1 H6 V13 M1 1 V10 L0 13 M1 4.5 H6 M1 8 H6 M0 10 L7 8 M8 4 H15 M12 0.5 V13 L10.5 12.5 M9.5 7 L10.5 9"/></g>
  <g transform="translate(938.5 683)" fill="none" stroke="#8a8a8a" stroke-width="1.5"><path d="M3 0 V5 M0.5 2.5 H3 M0 5.5 H7 M3.5 5.5 V8 M1 7 L0 8 M6 7 L4 13 M0 13 L3 11 M8 1 H15 M11 1 L10 3 M8.5 3 H14.5 V10 H8.5Z M11.5 5 V9 M10 10.5 L8 13.5 M13 10.5 L15 13.5"/></g>
  <g transform="translate(955.5 683)" fill="none" stroke="#8a8a8a" stroke-width="1.5"><path d="M5 0.5 L1 2 M0 4.5 H7 M3.5 1.5 V13.5 M3.5 5 L0 10 M3.5 5 L7 9 M9 3 H14.5 V11.5 H9Z"/></g>
  <g transform="translate(972.5 683)" fill="none" stroke="#8a8a8a" stroke-width="1.5"><path d="M1.5 1.5 H13.5 M0.5 5.5 H14.5 M7.5 1.5 Q7.5 9 1 13.5 M7.5 6 L14 13.5"/></g>
  <g transform="translate(989.5 683)" fill="none" stroke="#8a8a8a" stroke-width="1.5"><path d="M4 0.5 L1 5 H5 L1 9.5 L5 8.5 M0.5 13 L5.5 11 M7 4 H14.5 M7 8 H14.5 M10 0.5 Q11 9 14.5 13.5 M14 6 L8 13 M12.5 1 L14 2.5"/></g>
  <g transform="translate(1006.5 683)" fill="none" stroke="#8a8a8a" stroke-width="1.5"><path d="M1 1 L3 2.5 M0 5 H3 V12 L4.5 10.5 M7 1 H11 V4 Q11 5 13 5 H14 M7 1 Q7 5 5.5 6 M6 7 H13 L7 13.5 M8 8.5 L14.5 13.5"/></g>
  <g transform="translate(1023.5 683)" fill="none" stroke="#8a8a8a" stroke-width="1.5"><path d="M1 1 L3 2.5 M0 5 H3 V12 L4.5 10.5 M5.5 5.5 H14.5 M10 0.5 V13.5"/></g>
  <g transform="translate(1040.5 683)" fill="none" stroke="#8a8a8a" stroke-width="1.5"><path d="M2 2.5 H13 M1 6 H14 M7.5 0 L5.5 9 H12 L7 13.5 M8 11 L11 13"/></g>
  <g transform="translate(1057.5 683)" fill="none" stroke="#8a8a8a" stroke-width="1.5"><path d="M7.5 0 V1.5 M1 4 V2 H14 V4 M3 5 H12 M8 5 L2 9 M7 7 L1 12 M7 7 Q10 11 7 13.5 L5.5 12.5 M9 8.5 L14 12 M10 6 L13 5"/></g>
</svg>
</body></html>
